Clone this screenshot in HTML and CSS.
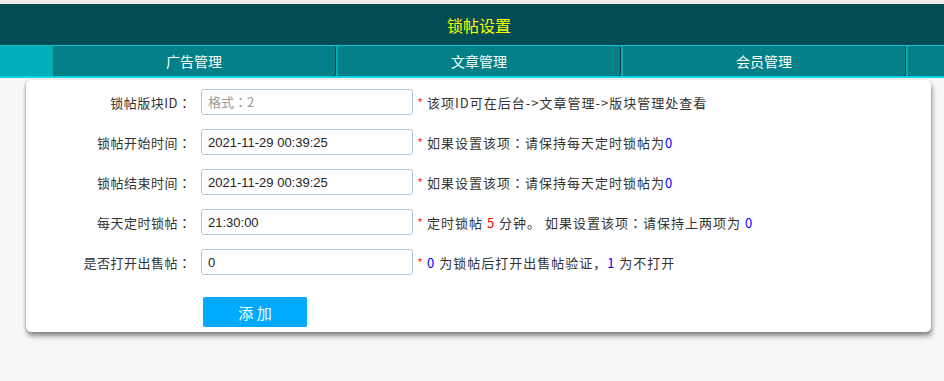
FILE: index.html
```html
<!DOCTYPE html>
<html lang="zh-CN">
<head>
<meta charset="utf-8">
<title>锁帖设置</title>
<link rel="stylesheet" href="styles.css">
</head>
<body>
<div class="page">
  <header class="topbar">
    <h1 class="title">锁帖设置</h1>
  </header>
  <nav class="nav">
    <a class="tab">广告管理</a>
    <a class="tab">文章管理</a>
    <a class="tab">会员管理</a>
    <a class="tab"></a>
  </nav>
  <main class="content">
    <form class="card">
      <div class="row">
        <label class="label">锁帖版块ID<span class="colon" lang="zh-TW">：</span></label>
        <input class="field" type="text" placeholder="格式：2" lang="zh-TW">
        <span class="note"><i class="star">*</i> 该项ID可在后台->文章管理->版块管理处查看</span>
      </div>
      <div class="row">
        <label class="label">锁帖开始时间<span class="colon" lang="zh-TW">：</span></label>
        <input class="field" type="text" value="2021-11-29 00:39:25">
        <span class="note"><i class="star">*</i> 如果设置该项<span class="colon" lang="zh-TW">：</span>请保持每天定时锁帖为<b class="blue">0</b></span>
      </div>
      <div class="row">
        <label class="label">锁帖结束时间<span class="colon" lang="zh-TW">：</span></label>
        <input class="field" type="text" value="2021-11-29 00:39:25">
        <span class="note"><i class="star">*</i> 如果设置该项<span class="colon" lang="zh-TW">：</span>请保持每天定时锁帖为<b class="blue">0</b></span>
      </div>
      <div class="row">
        <label class="label">每天定时锁帖<span class="colon" lang="zh-TW">：</span></label>
        <input class="field" type="text" value="21:30:00">
        <span class="note"><i class="star">*</i> 定时锁帖 <b class="red">5</b> 分钟。 如果设置该项<span class="colon" lang="zh-TW">：</span>请保持上两项为 <b class="blue">0</b></span>
      </div>
      <div class="row">
        <label class="label">是否打开出售帖<span class="colon" lang="zh-TW">：</span></label>
        <input class="field" type="text" value="0">
        <span class="note"><i class="star">*</i> <b class="blue">0</b> 为锁帖后打开出售帖验证，<b class="blue">1</b> 为不打开</span>
      </div>
      <div class="actions">
        <button class="btn" type="button">添 加</button>
      </div>
    </form>
  </main>
</div>
</body>
</html>
```
FILE: styles.css
```css
* { box-sizing: border-box; }
html, body {
  margin: 0;
  padding: 0;
  background: #f7f7f7;
  font-family: "Noto Sans CJK SC", "Microsoft YaHei", sans-serif;
  color: #333;
}
.page {
  padding-top: 4px;
  background: #eeeeee;
  min-height: 381px;
}
.topbar {
  height: 41px;
  background: #044d55;
  display: flex;
  align-items: center;
  justify-content: center;
  padding-left: 14px;
}
.title {
  margin: 0;
  font-size: 16px;
  font-weight: normal;
  color: #ffff00;
  line-height: 1;
}
.nav {
  height: 33px;
  background: #00afba;
  border-top: 1px solid #13c3cc;
  border-bottom: 2px solid #10d4e4;
  display: flex;
  gap: 1px;
  padding-left: 52px;
  overflow: hidden;
}
.tab {
  flex: 0 0 284px;
  height: 31px;
  background: #038088;
  border-left: 1px solid #0aa4ad;
  border-right: 1px solid #0a3b40;
  border-bottom: 1px solid #0a3b40;
  border-radius: 2px 2px 4px 4px;
  color: #ffffff;
  font-size: 14px;
  display: flex;
  align-items: center;
  justify-content: center;
}
.content {
  background: #f7f7f7;
  padding: 2px 12px 49px 26px;
}
.card {
  width: 905px;
  background: #ffffff;
  border-radius: 5px;
  box-shadow: 1px 4px 5px rgba(0, 0, 0, 0.45), -1px 0 2px rgba(0, 0, 0, 0.15);
  padding: 9px 0 5px 0;
  display: flex;
  flex-direction: column;
  gap: 14px;
}
.row {
  display: flex;
  align-items: center;
  height: 26px;
}
.label {
  width: 165px;
  text-align: right;
  font-size: 13px;
  letter-spacing: 0.5px;
  color: #333;
  margin-right: 10px;
  white-space: nowrap;
}
.colon {
  font-family: "Noto Sans CJK TC", "Noto Sans CJK SC", sans-serif;
  font-feature-settings: "locl" 0;
}
.label .colon { letter-spacing: 0; }
.field {
  width: 212px;
  height: 26px;
  border: 1px solid #a9c7de;
  border-radius: 3px;
  padding: 0 6px;
  font-family: "Liberation Sans", "Noto Sans CJK SC", sans-serif;
  font-size: 13px;
  color: #222;
  outline: none;
}
.field::placeholder {
  color: #999;
  font-family: "Noto Sans CJK TC", sans-serif;
}
.note {
  margin-left: 4px;
  font-size: 13px;
  letter-spacing: 1px;
  color: #333;
  white-space: nowrap;
}
.star { font-style: normal; color: #ff4444; letter-spacing: 0; }
.blue { font-weight: normal; color: #0000ff; }
.red { font-weight: normal; color: #ff0000; }
.actions {
  padding-left: 177px;
  padding-top: 8px;
}
.btn {
  width: 104px;
  height: 30px;
  border: none;
  border-radius: 2px;
  background: #00aaff;
  color: #ffffff;
  font-family: "Noto Sans CJK SC", sans-serif;
  font-size: 15px;
  cursor: pointer;
}
```
